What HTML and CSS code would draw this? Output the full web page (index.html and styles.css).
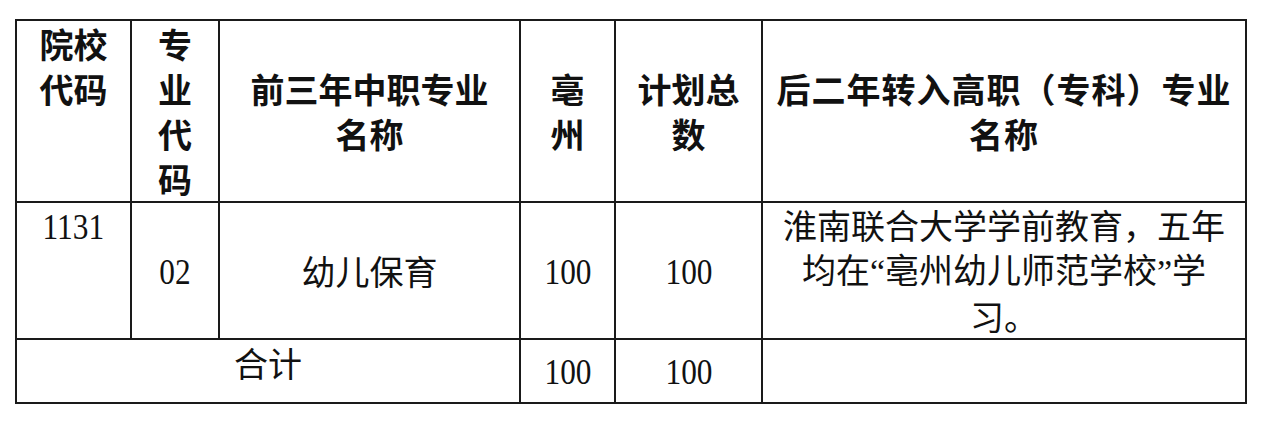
FILE: index.html
```html
<!DOCTYPE html>
<html lang="zh-CN">
<head>
<meta charset="utf-8">
<title>招生计划</title>
<link rel="stylesheet" href="styles.css">
</head>
<body>
<table class="plan">
  <colgroup>
    <col class="c1"><col class="c2"><col class="c3"><col class="c4"><col class="c5"><col class="c6">
  </colgroup>
  <tr class="head">
    <th class="top">院校<br>代码</th>
    <th class="top">专<br>业<br>代<br>码</th>
    <th>前三年中职专业<br>名称</th>
    <th>亳<br>州</th>
    <th>计划总<br>数</th>
    <th class="wide">后二年转入高职（专科）专业<br>名称</th>
  </tr>
  <tr class="data">
    <td class="top num-top"><span class="num">1131</span></td>
    <td><span class="num">02</span></td>
    <td>幼儿保育</td>
    <td><span class="num">100</span></td>
    <td><span class="num">100</span></td>
    <td>淮南联合大学学前教育，五年<br>均在<span class="q">“</span>亳州幼儿师范学校<span class="q">”</span>学<br>习。</td>
  </tr>
  <tr class="total">
    <td colspan="3" class="top sum">合计</td>
    <td><span class="num">100</span></td>
    <td><span class="num">100</span></td>
    <td></td>
  </tr>
</table>
</body>
</html>
```

FILE: styles.css
```css
html, body {
  margin: 0;
  padding: 0;
  background: #ffffff;
}

body {
  font-family: "Noto Sans CJK SC", "Noto Sans", sans-serif;
  color: #111111;
}

.plan {
  margin: 19px 0 0 15px;
  width: 1230px;
  table-layout: fixed;
  border-collapse: collapse;
}

.c1 { width: 115px; }
.c2 { width: 88px; }
.c3 { width: 301px; }
.c4 { width: 95px; }
.c5 { width: 147px; }
.c6 { width: 484px; }

.plan th,
.plan td {
  border: 2px solid #1a1a1a;
  padding: 0;
  font-size: 34px;
  line-height: 45px;
  text-align: center;
  vertical-align: middle;
}

.plan th {
  font-weight: 700;
}

.plan td {
  font-weight: 400;
}

.plan .top {
  vertical-align: top;
}

.head { height: 181px; }
.data { height: 130px; }
.total { height: 64px; }

.data td {
  line-height: 44px;
}

.wide {
  letter-spacing: 1px;
}

.num-top {
  padding-top: 3px;
}

.sum {
  padding-top: 5px;
}

.num {
  display: inline-block;
  font-family: "Liberation Serif", "Times New Roman", serif;
  font-size: 36px;
  transform: scaleX(0.87);
}

.q {
  font-family: "Liberation Serif", "Times New Roman", serif;
}
```
